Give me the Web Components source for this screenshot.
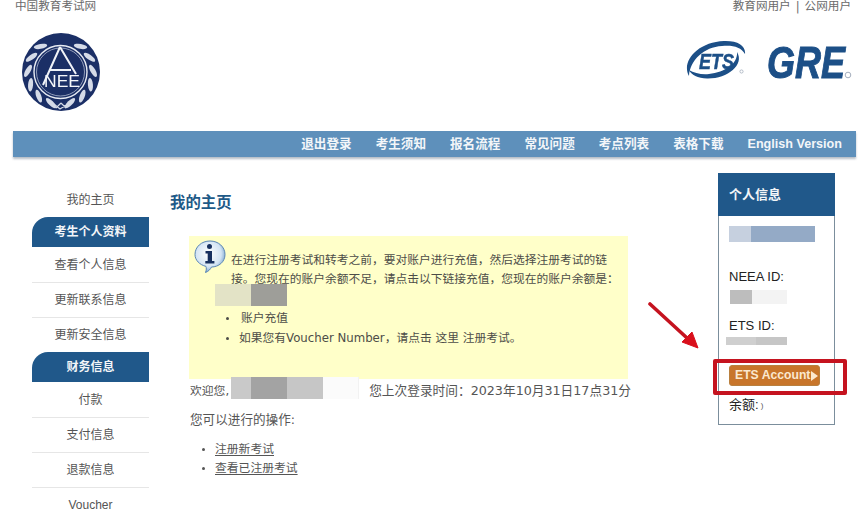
<!DOCTYPE html>
<html lang="zh">
<head>
<meta charset="utf-8">
<title>我的主页</title>
<style>
  html, body { margin: 0; height: 518px; overflow: hidden; background: #fff; }
  body { font-family: "DejaVu Sans", "Noto Sans CJK SC", sans-serif; font-size: 11.75px; color: #555; }
</style>
</head>
<body>
<gre-page>
  <top-strip slot="top"></top-strip>
  <brand-header slot="top"></brand-header>
  <main-nav slot="top"></main-nav>

  <side-menu slot="left">
    <menu-link>我的主页</menu-link>
    <menu-head>考生个人资料</menu-head>
    <menu-link line>查看个人信息</menu-link>
    <menu-link line>更新联系信息</menu-link>
    <menu-link>更新安全信息</menu-link>
    <menu-head>财务信息</menu-head>
    <menu-link line>付款</menu-link>
    <menu-link line>支付信息</menu-link>
    <menu-link line>退款信息</menu-link>
    <menu-link>Voucher</menu-link>
  </side-menu>

  <home-content slot="center"></home-content>
  <info-panel slot="right"></info-panel>
</gre-page>

<script>
// petit utilitaire : shadow root ouvert + contenu
function define(name, html, setup) {
  customElements.define(name, class extends HTMLElement {
    constructor() {
      super();
      this.attachShadow({ mode: 'open' }).innerHTML = html;
      if (setup) setup(this.shadowRoot);
    }
  });
}

define('gre-page', `
<style>
  :host { display: block; width: 859px; height: 518px; overflow: hidden; }
  .columns { display: flex; padding-left: 32px; margin-top: 16px; align-items: flex-start; }
  .left { display: block; width: 117px; margin-top: 9px; flex: none; }
  .center { display: block; width: 548px; margin-left: 21px; flex: none; }
</style>
<slot name="top"></slot>
<div class="columns">
  <div class="left"><slot name="left"></slot></div>
  <div class="center"><slot name="center"></slot></div>
  <slot name="right"></slot>
</div>`);

define('top-strip', `
<style>
  :host { display: flex; justify-content: space-between; height: 13px; line-height: 13px;
          padding: 0 8px 0 15px; font-size: 11.6px; color: #6a6a6a; }
  b { font-weight: 400; margin: 0 5px; }
</style>
<span>中国教育考试网</span><span>教育网用户<b>|</b>公网用户</span>`);

define('neea-logo', `
<style>:host { display: block; width: 78px; height: 78px; } svg { display: block; filter: blur(.3px); }</style>
<svg width="78" height="78" viewBox="22 33 78 78">
  <circle cx="61" cy="72" r="39" fill="#1b2f66"/>
  <g id="leaves" fill="#d5dbe8"></g>
  <path d="M54 104 L60 109 M68 104 L60 109 M56 108 L61 103 M66 108 L61 103" stroke="#d5dbe8" stroke-width="1.2" fill="none"/>
  <circle cx="60.5" cy="72" r="26.5" fill="#1b2f66" stroke="#e6eaf2" stroke-width="1.4"/>
  <circle cx="60.5" cy="72" r="24" fill="none" stroke="#aeb9cf" stroke-width=".8"/>
  <path d="M60 47 L43 85 M60 47 L76 74 M49 70 H71" fill="none" stroke="#f0f3f8" stroke-width="2"/>
  <text x="62" y="87" text-anchor="middle" font-family="Liberation Sans, sans-serif" font-size="16" fill="#f4f6fa" textLength="36" lengthAdjust="spacingAndGlyphs">NEE</text>
</svg>`, root => {
  // couronne de laurier : 6 feuilles de chaque côté
  let out = '';
  for (let i = 0; i < 6; i++) {
    const a = 38 + i * 25;
    out += `<ellipse cx="60.5" cy="39.5" rx="6.8" ry="2.5" transform="rotate(${a} 60.5 72) rotate(-28 60.5 39.5)"/>`;
    out += `<ellipse cx="60.5" cy="39.5" rx="6.8" ry="2.5" transform="rotate(${-a} 60.5 72) rotate(28 60.5 39.5)"/>`;
  }
  root.getElementById('leaves').innerHTML = out;
});

define('ets-gre-logo', `
<style>
  :host { display: block; width: 168px; height: 64px; }
  svg { display: block; filter: blur(.3px); }
  text { font-family: "Liberation Sans", sans-serif; font-weight: 700; font-style: italic; fill: #1c4f87; stroke: #1c4f87; }
</style>
<svg width="168" height="64" viewBox="684 30 168 64">
  <path d="M689 76 C681 62 697 42 724 41 C738 40.5 746 46 745 54 C741 47 733 45 722 46 C704 47 690 60 689 76 Z" fill="#1c4f87"/>
  <path d="M737 52 C745 65 727 79 707 78.5 C698 78 691 75 689 70 C694 73 702 75 709 74 C725 72 738 64 737 52 Z" fill="#1c4f87"/>
  <text x="699" y="69" font-size="22" stroke-width=".5" textLength="35" lengthAdjust="spacingAndGlyphs">ETS</text>
  <text transform="translate(767 78) scale(1 1.24)" font-size="36" stroke-width=".8">GRE</text>
  <circle cx="848" cy="75" r="2.8" fill="none" stroke="#9aa5b5" stroke-width=".9"/>
  <circle cx="741.5" cy="71.5" r="1.6" fill="none" stroke="#9aa5b5" stroke-width=".7"/>
</svg>`);

define('brand-header', `
<style>
  :host { display: flex; justify-content: space-between; align-items: flex-start;
          height: 118px; padding: 20px 7px 0 22px; box-sizing: border-box; }
  ets-gre-logo { margin-top: -3px; }
</style>
<neea-logo></neea-logo><ets-gre-logo></ets-gre-logo>`);

define('main-nav', `
<style>
  :host { display: flex; justify-content: flex-end; gap: 24px; height: 26px; margin: 0 3px 0 13px;
          padding-right: 14px; background: #5e90bb; box-shadow: 0 2px 2px rgba(90,110,130,.45);
          font: 700 12.6px/26px "Liberation Sans", "Noto Sans CJK SC", sans-serif; color: #f3f6f9; }
</style>
<span>退出登录</span><span>考生须知</span><span>报名流程</span><span>常见问题</span><span>考点列表</span><span>表格下载</span><span>English Version</span>`);

define('side-menu', `
<style>:host { display: block; }</style><slot></slot>`);

define('menu-link', `
<style>
  :host { display: block; height: 35px; padding-top: 1px; box-sizing: border-box; text-align: center;
          font: 12px/35px "Liberation Sans", "Noto Sans CJK SC", sans-serif; color: #555; }
  :host([line]) { box-shadow: 0 1px 0 #e6e6e6; }
</style>
<slot></slot>`);

define('menu-head', `
<style>
  :host { display: block; height: 30px; background: #20588a; border-radius: 16px 0 0 0; text-align: center;
          font: 700 12px/31px "DejaVu Sans", "Noto Sans CJK SC", sans-serif; color: #f2f5f8; }
</style>
<slot></slot>`);

define('blur-block', `
<style>
  :host { display: inline-block; height: 100%; filter: blur(.5px); vertical-align: top; }
</style>`);

define('info-icon', `
<style>:host { display: block; width: 32px; height: 33px; flex: none; } svg { display: block; }</style>
<svg width="32" height="33" viewBox="0 0 32 33">
  <defs>
    <radialGradient id="bub" cx=".45" cy=".4" r=".65">
      <stop offset="0" stop-color="#ffffff"/>
      <stop offset=".65" stop-color="#d3e4f4"/>
      <stop offset="1" stop-color="#5d8fc2"/>
    </radialGradient>
  </defs>
  <path d="M16 1 C24.6 1 31 7 31 14.5 C31 22 24.6 27 17.5 27 C16.5 29 14.5 31.5 11.5 32.5 C12.5 30 12.5 28 12 26.4 C5.6 24.8 1 20.2 1 14.5 C1 7 7.4 1 16 1 Z" fill="url(#bub)" stroke="#5a86b5" stroke-width="1"/>
  <circle cx="15.5" cy="6.6" r="2.5" fill="#17305f"/>
  <path d="M11.5 11 H18 V21 H20.4 V23.4 H11.3 V21 H13.7 V13.4 H11.5 Z" fill="#17305f"/>
</svg>`);

define('alert-box', `
<style>
  :host { display: block; height: 143px; width: 439px; margin-left: 19px; background: #ffffc9; box-sizing: border-box;
          padding-top: 4px; line-height: 18.5px; color: #4d4d48; }
  .top { display: flex; gap: 5px; padding-left: 5px; }
  p { margin: 11px 0 0; white-space: nowrap; }
  .mask { display: flex; height: 22px; margin: -4px 0 0 26px; }
  .a { width: 36px; background: #e3e3c6; }
  .b { width: 36px; background: #9e9e99; }
  ul { margin: 0; padding: 2px 0 0 50px; line-height: 20px; }
  li:first-child { padding-left: 2px; }
  li::marker { font-size: 10px; }
</style>
<div class="top">
  <info-icon></info-icon>
  <p>在进行注册考试和转考之前，要对账户进行充值，然后选择注册考试的链<br>接。您现在的账户余额不足，请点击以下链接充值，您现在的账户余额是：</p>
</div>
<div class="mask"><blur-block class="a"></blur-block><blur-block class="b"></blur-block></div>
<ul>
  <li>账户充值</li>
  <li>如果您有Voucher Number，请点击 这里 注册考试。</li>
</ul>`);

define('welcome-row', `
<style>
  :host { display: flex; align-items: center; height: 22px; margin: -2px 0 0 20px; color: #555; }
  span { position: relative; top: 1px; }
  .who { display: flex; height: 22px; margin-left: 2px; width: 128px; box-sizing: border-box; border-right: 1px solid #f2f2f2; }
  .c { width: 20px; background: #c9c9c9; }
  .d { width: 36px; background: #a3a3a3; }
  .e { width: 36px; background: #c6c6c6; }
  .f { flex: 1; background: #fbfbfb; }
  .last { margin-left: 10px; font-size: 12.7px; }
  .name { font-size: 11.8px; }
</style>
<span class="name">欢迎您,</span>
<div class="who"><blur-block class="c"></blur-block><blur-block class="d"></blur-block><blur-block class="e"></blur-block><blur-block class="f"></blur-block></div>
<span class="last">您上次登录时间：2023年10月31日17点31分</span>`);

define('home-content', `
<style>
  :host { display: block; }
  h1 { margin: 21px 0 24px; font: 700 15.4px/18px "DejaVu Sans", "Noto Sans CJK SC", sans-serif; color: #1e5a88; }
  p { margin: 11px 0 0 20px; font-size: 12.6px; line-height: 20px; color: #555; }
  ul { margin: 10px 0 0; padding: 0 0 0 45px; line-height: 19px; font-size: 11.8px; color: #555; }
  u { text-underline-offset: 2px; }
  li::marker { font-size: 10px; }
</style>
<h1>我的主页</h1>
<alert-box></alert-box>
<welcome-row></welcome-row>
<p>您可以进行的操作:</p>
<ul>
  <li><u>注册新考试</u></li>
  <li><u>查看已注册考试</u></li>
</ul>`);

define('ets-button', `
<style>
  :host { display: flex; align-items: center; width: 91px; height: 21px; box-sizing: border-box; padding-left: 5px;
          background: #c8752a; border-radius: 3px; border: 1px solid #b9803f;
          font: 700 12.2px/19px "Liberation Sans", sans-serif; color: #fbe8cf; white-space: nowrap; }
  i { width: 0; height: 0; margin-left: 1px; border-left: 7px solid #fbe8cf; border-top: 5.5px solid transparent; border-bottom: 5.5px solid transparent; }
</style>
<span><slot></slot></span><i></i>`);

define('info-panel', `
<style>
  :host { display: block; position: relative; width: 117px; height: 252px; box-sizing: border-box;
          border: 1px solid #7b8e9c; border-top: 0; font: 13px/16px "Liberation Sans", "Noto Sans CJK SC", sans-serif; color: #222; flex: none; }
  h2 { margin: 0 -1px; height: 43px; padding-left: 11px; background: #20588a;
       font: 700 13px/43px "DejaVu Sans", "Noto Sans CJK SC", sans-serif; color: #f2f5f8; }
  .body { padding-left: 10px; }
  .m { display: flex; }
  .m1 { height: 16px; margin-top: 10px; }
  .m1 .a { width: 22px; background: #c6d0df; } .m1 .b { width: 64px; background: #94aac6; }
  .l1 { margin-top: 27px; }
  .m2 { height: 14px; margin-top: 5px; padding-left: 1px; }
  .m2 .a { width: 22px; background: #bdbdbd; } .m2 .b { width: 35px; background: #f3f3f3; }
  .l2 { margin-top: 14px; }
  .m3 { height: 8px; margin: 3px 0 0 -3px; }
  .m3 .a { width: 30px; background: #cfcfcf; } .m3 .b { width: 31px; background: #c6c6c6; }
  ets-button { margin-top: 20px; }
  .bal { margin-top: 11px; }
  .bal small { font-size: 8px; vertical-align: 1px; color: #555; margin-left: 2px; }
  /* annotations rouges posées sur la capture */
  .frame { position: absolute; left: -6px; top: 186px; width: 134px; height: 36px; box-sizing: border-box;
           border: 4px solid #c5131f; border-radius: 2px; }
  .arrow { position: absolute; left: -71px; top: 129px; }
</style>
<h2>个人信息</h2>
<div class="body">
  <div class="m m1"><blur-block class="a"></blur-block><blur-block class="b"></blur-block></div>
  <div class="l1">NEEA ID:</div>
  <div class="m m2"><blur-block class="a"></blur-block><blur-block class="b"></blur-block></div>
  <div class="l2">ETS ID:</div>
  <div class="m m3"><blur-block class="a"></blur-block><blur-block class="b"></blur-block></div>
  <ets-button>ETS Account</ets-button>
  <div class="bal">余额:<small>)</small></div>
</div>
<div class="frame"></div>
<svg class="arrow" width="54" height="48" viewBox="0 0 54 48">
  <path d="M2 2 L39 36" stroke="#c5131f" stroke-width="3.6" stroke-linecap="round"/>
  <path d="M50 46 L34 40 L44 30 Z" fill="#d9101c" stroke="#d9101c" stroke-width="1"/>
</svg>`);
</script>
</body>
</html>
